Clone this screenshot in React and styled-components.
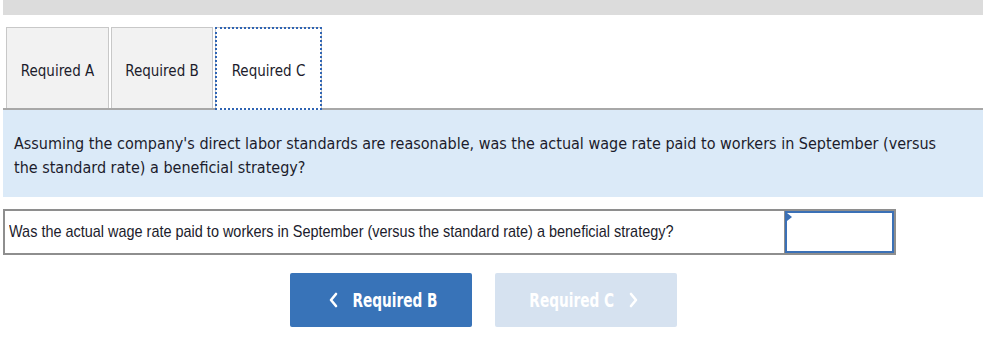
import React from 'react';
import styled, { createGlobalStyle } from 'styled-components';

const GlobalStyle = createGlobalStyle`
	body {
		margin: 0;
		background: #ffffff;
		font-family: "DejaVu Sans Condensed", "DejaVu Sans", sans-serif;
		font-stretch: condensed;
	}
`;

const Page = styled.div`
	width: 980px;
	margin-left: 3px;
	display: flex;
	flex-direction: column;
`;

const TopBar = styled.div`
	height: 15px;
	background: #dcdcdc;
`;

const TabRow = styled.div`
	display: flex;
	align-items: flex-end;
	gap: 2px;
	margin-top: 12px;
	padding-left: 3px;
	border-bottom: 2px solid #a8a8a8;
`;

const Tab = styled.button`
	box-sizing: border-box;
	width: ${(p) => p.$w}px;
	margin-bottom: ${(p) => (p.$active ? '-2px' : '0')};
	height: ${(p) => (p.$active ? '83px' : '81px')};
	background: ${(p) => (p.$active ? '#ffffff' : '#f2f2f2')};
	border: 1px solid #c8c8c8;
	border-bottom: none;
	outline: ${(p) => (p.$active ? '2px dotted #2f64b3' : 'none')};
	outline-offset: -2px;
	font-family: inherit;
	font-stretch: condensed;
	font-size: 15px;
	color: #1c1c2c;
	padding: 6px 0 0;
	padding-bottom: ${(p) => (p.$active ? '2px' : '0')};
	cursor: pointer;
`;

const Question = styled.div`
	background: #dbeaf8;
	padding: 22px 11px 17px;
	font-size: 16px;
	line-height: 24px;
	color: #1c1c2c;
`;

const AnswerRow = styled.div`
	display: flex;
	width: 893px;
	height: 46px;
	box-sizing: border-box;
	margin-top: 12px;
	border: 2px solid #8e8e8e;
`;

const AnswerLabel = styled.div`
	flex: 1 1 0;
	min-width: 0;
	display: flex;
	align-items: center;
	padding-left: 4px;
	border-right: 1px solid #8e8e8e;
	font-family: "Liberation Sans", Arial, sans-serif;
	font-size: 17px;
	color: #1c1c2c;
`;

const Squeeze = styled.span`
	display: inline-block;
	flex-shrink: 0;
	transform: scaleX(${(p) => p.$x});
	transform-origin: ${(p) => p.$origin || 'left center'};
	white-space: nowrap;
`;

const AnswerInput = styled.div`
	position: relative;
	flex-shrink: 0;
	width: 109px;
	box-sizing: border-box;
	border: 2px solid #3b70b6;
	background: #ffffff;

	&::before {
		content: '';
		position: absolute;
		top: 0;
		left: 0;
		border-top: 4px solid transparent;
		border-bottom: 4px solid transparent;
		border-left: 5px solid #3b70b6;
	}
`;

const NavRow = styled.div`
	display: flex;
	gap: 23px;
	margin-top: 18px;
	padding-left: 287px;
`;

const NavButton = styled.button`
	width: 182px;
	height: 54px;
	border: none;
	border-radius: 2px;
	background: ${(p) => (p.$disabled ? '#d6e2f0' : '#3873b8')};
	color: #ffffff;
	font-family: "DejaVu Sans Condensed", "DejaVu Sans", sans-serif;
	font-stretch: condensed;
	font-weight: bold;
	font-size: 20px;
	display: flex;
	align-items: center;
	justify-content: center;
	gap: 12px;
	padding: 0;
	cursor: ${(p) => (p.$disabled ? 'default' : 'pointer')};
`;

const Label = styled.span`
	width: 82px;
	display: flex;
	justify-content: center;
`;

const Chevron = ({ dir }) => (
	<svg width="16" height="18" viewBox="0 0 16 18">
		<path
			d={dir === 'left' ? 'M10 3 L5 9 L10 15' : 'M6 3 L11 9 L6 15'}
			fill="none"
			stroke="#ffffff"
			strokeWidth="2.6"
			strokeLinecap="round"
			strokeLinejoin="round"
		/>
	</svg>
);

const tabs = [
	{ label: 'Required A', w: 103 },
	{ label: 'Required B', w: 102 },
	{ label: 'Required C', w: 107, active: true },
];

const App = () => {
	return (
		<>
			<GlobalStyle />
			<Page>
				<TopBar />
				<TabRow>
					{tabs.map((t) => (
						<Tab key={t.label} $w={t.w} $active={t.active}>
							{t.label}
						</Tab>
					))}
				</TabRow>
				<Question>
					Assuming the company's direct labor standards are reasonable, was the actual wage rate paid to workers in September (versus
					<br />
					the standard rate) a beneficial strategy?
				</Question>
				<AnswerRow>
					<AnswerLabel>
						<Squeeze $x={0.85}>
							Was the actual wage rate paid to workers in September (versus the standard rate) a beneficial strategy?
						</Squeeze>
					</AnswerLabel>
					<AnswerInput />
				</AnswerRow>
				<NavRow>
					<NavButton>
						<Chevron dir="left" />
						<Label>
							<Squeeze $x={0.76} $origin="center">Required B</Squeeze>
						</Label>
					</NavButton>
					<NavButton $disabled>
						<Label>
							<Squeeze $x={0.76} $origin="center">Required C</Squeeze>
						</Label>
						<Chevron dir="right" />
					</NavButton>
				</NavRow>
			</Page>
		</>
	);
};

export default App;
